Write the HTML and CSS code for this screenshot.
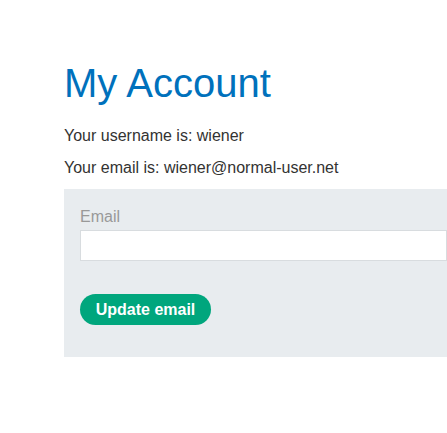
FILE: index.html
```html
<!DOCTYPE html>
<html>
<head>
<meta charset="utf-8">
<link rel="stylesheet" href="styles.css">
</head>
<body>
<div class="page">
  <h1 class="title">My Account</h1>
  <p class="info">Your username is: wiener</p>
  <p class="info">Your email is: wiener@normal-user.net</p>
  <form class="panel">
    <label class="label" for="email">Email</label>
    <input class="field" id="email" type="email">
    <button class="btn" type="button">Update email</button>
  </form>
</div>
</body>
</html>
```
FILE: styles.css
```css
html, body {
  margin: 0;
  padding: 0;
  background: #fff;
}
body {
  font-family: "Liberation Sans", Arial, sans-serif;
  color: #333332;
}
.page {
  padding: 56px 0 0 64px;
  display: flex;
  flex-direction: column;
}
.title {
  margin: 0 0 17px 0;
  font-size: 40px;
  font-weight: normal;
  color: #0071bc;
  line-height: 54px;
}
.info {
  margin: 0 0 14px 0;
  font-size: 16px;
  line-height: 18px;
}
.panel {
  margin-top: -2px;
  background: #e8ecef;
  padding: 18px 0 32px 16px;
  display: flex;
  flex-direction: column;
  align-items: flex-start;
}
.label {
  font-size: 16px;
  color: #999;
  line-height: 20px;
  margin-bottom: 3px;
}
.field {
  box-sizing: border-box;
  width: 100%;
  height: 31px;
  border: 1px solid #d8dcdf;
  background: #fff;
  margin: 0;
}
.btn {
  margin-top: 33px;
  height: 31px;
  width: 131px;
  border: none;
  border-radius: 16px;
  background: #00a67d;
  color: #fff;
  font-family: "Liberation Sans", Arial, sans-serif;
  font-weight: bold;
  font-size: 16px;
  padding: 0;
}
```
